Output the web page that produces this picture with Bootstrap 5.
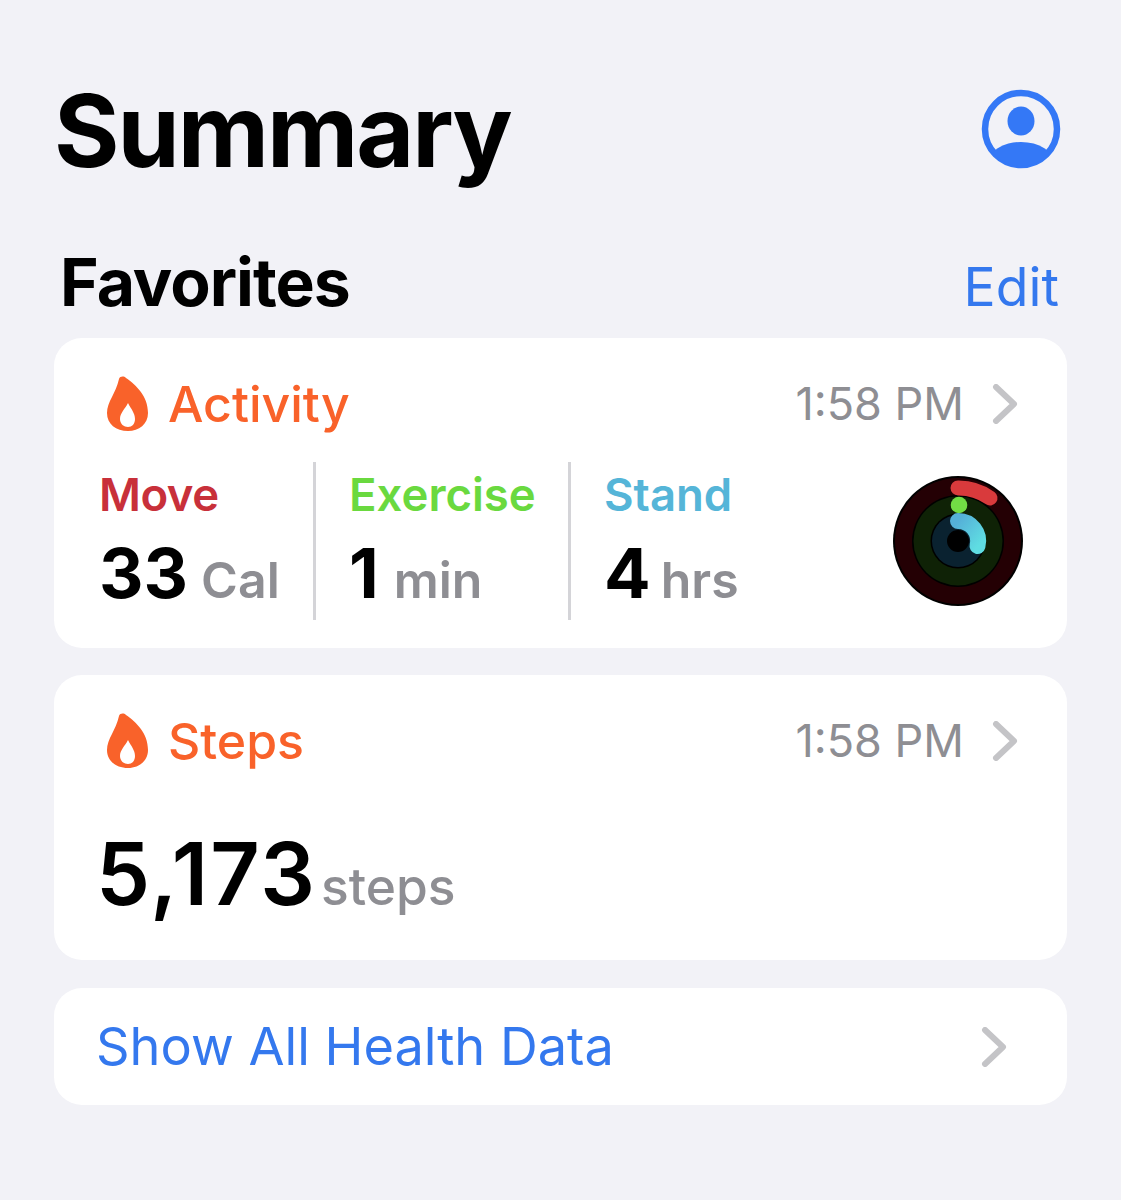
<!DOCTYPE html>
<html lang="en">
<head>
<meta charset="UTF-8">
<title>Summary</title>
<link href="https://cdn.jsdelivr.net/npm/bootstrap@5.3.0/dist/css/bootstrap.min.css" rel="stylesheet">
<style>
body { background: #f2f2f7; font-family: Inter, "Liberation Sans", sans-serif; color: #000; }
.screen { width: 1121px; height: 1200px; padding: 76px 54px 0 54px; }
.big-title { font-size: 100px; font-weight: 700; line-height: 110px; letter-spacing: -2px; margin: 0; }
.sec-title { font-size: 66px; font-weight: 700; line-height: 74px; letter-spacing: -1px; margin: 0; padding-left: 6px; }
.edit-link { font-size: 53.5px; color: #3478ee; line-height: 74px; padding-right: 8px; padding-top: 5px; }
.sec-head { margin-top: 59px; margin-bottom: 14px; }
.top-head { height: 110px; }
.avatar { margin-right: 6px; margin-top: -4px; }
.tile { background: #fff; border-radius: 28px; }
.tile-activity { height: 310px; padding: 36px 49px 0 52px; margin-bottom: 27px; }
.tile-steps { height: 285px; padding: 36px 49px 0 52px; margin-bottom: 28px; }
.tile-link { height: 117px; padding: 0 60px 0 42px; }
.tile-name { color: #f9622a; font-size: 50px; font-weight: 500; line-height: 60px; margin-left: 19px; }
.tile-time { color: #8e8e93; font-size: 45px; line-height: 60px; margin-right: 28px; }
.metric { height: 158px; }
.metric-a { width: 217px; border-right: 3px solid #d4d4d8; }
.metric-b { width: 255px; padding-left: 33px; border-right: 3px solid #d4d4d8; }
.metric-c { padding-left: 33px; }
.metric-name { font-size: 45.5px; font-weight: 600; line-height: 66px; letter-spacing: -.5px; }
.metric-val { font-size: 69px; font-weight: 700; line-height: 90px; }
.unit { font-size: 50px; font-weight: 600; color: #8e8e93; margin-left: 13px; }
.unit-wide { margin-left: 15px; }
.unit-tight { margin-left: 10px; }
.c-move { color: #c8303a; }
.c-ex { color: #6ad93f; letter-spacing: 0; }
.c-stand { color: #55b5d8; letter-spacing: 0; }
.steps-val { font-size: 86px; font-weight: 600; line-height: 100px; margin-top: 53px; margin-left: -10px; letter-spacing: 2px; }
.steps-unit { font-size: 51.5px; font-weight: 500; color: #8e8e93; margin-left: 4px; letter-spacing: 0; }
.link-text { font-size: 52.3px; color: #3478ee; }
.metric-row { margin-top: 28px; margin-left: -7px; }
.ring-icon { margin-top: 14px; margin-right: -5px; }
</style>
</head>
<body>
<div class="screen">
  <div class="d-flex justify-content-between align-items-center top-head">
    <h1 class="big-title">Summary</h1>
    <svg class="avatar" width="80" height="80" viewBox="0 0 80 80"><defs><clipPath id="av"><circle cx="40" cy="40" r="37"/></clipPath></defs><circle cx="40" cy="40" r="36" fill="none" stroke="#3478f6" stroke-width="6.5"/><ellipse cx="40" cy="32" rx="13.5" ry="14.5" fill="#3478f6"/><ellipse cx="40" cy="74" rx="33" ry="21" fill="#3478f6" clip-path="url(#av)"/></svg>
  </div>
  <div class="d-flex justify-content-between sec-head">
    <h2 class="sec-title">Favorites</h2>
    <div class="edit-link">Edit</div>
  </div>
  <div class="tile tile-activity">
    <div class="d-flex align-items-center">
      <svg width="43" height="56" viewBox="0 0 43 56"><path d="M13 3C14 0 18 0 20 2C30 9 42 20 42 37C42 48 33 55 22 55C10 55 1 48 1 37C1 26 10 17 13 3Z" fill="#f9622a"/><path d="M22 27C25 33 29 37 29 43C29 48 26 51 22 51C18 51 14 48 14 43C14 37 19 33 22 27Z" fill="#fff"/></svg>
      <span class="tile-name">Activity</span>
      <span class="tile-time ms-auto">1:58 PM</span>
      <svg width="26" height="40" viewBox="0 0 26 40"><path d="M4 3L22 20L4 37" fill="none" stroke="#c4c4c7" stroke-width="6" stroke-linecap="round" stroke-linejoin="round"/></svg>
    </div>
    <div class="d-flex metric-row">
      <div class="metric metric-a"><div class="metric-name c-move">Move</div><div class="metric-val">33<span class="unit">Cal</span></div></div>
      <div class="metric metric-b"><div class="metric-name c-ex">Exercise</div><div class="metric-val">1<span class="unit unit-wide">min</span></div></div>
      <div class="metric metric-c"><div class="metric-name c-stand">Stand</div><div class="metric-val">4<span class="unit unit-tight">hrs</span></div></div>
      <svg class="ms-auto ring-icon" width="130" height="130" viewBox="0 0 130 130">
        <defs><linearGradient id="bl" x1="0" y1="0" x2="1" y2="1"><stop offset="0" stop-color="#55b0d8"/><stop offset="1" stop-color="#5fdde2"/></linearGradient></defs>
        <circle cx="65" cy="65" r="65" fill="#000"/>
        <circle cx="65" cy="65" r="63" fill="#240004"/>
        <circle cx="65" cy="65" r="46" fill="#000"/>
        <circle cx="65" cy="65" r="44.5" fill="#0f2206"/>
        <circle cx="65" cy="65" r="27.5" fill="#000"/>
        <circle cx="65" cy="65" r="26" fill="#0a2230"/>
        <circle cx="65" cy="65" r="11" fill="#000"/>
        <path d="M65 12A54 54 0 0 1 97 22" fill="none" stroke="#d93a3c" stroke-width="15" stroke-linecap="round"/>
        <circle cx="66" cy="29" r="8.3" fill="#72dc45"/>
        <path d="M65 45A20 20 0 0 1 84.5 70" fill="none" stroke="url(#bl)" stroke-width="16" stroke-linecap="round"/>
      </svg>
    </div>
  </div>
  <div class="tile tile-steps">
    <div class="d-flex align-items-center">
      <svg width="43" height="56" viewBox="0 0 43 56"><path d="M13 3C14 0 18 0 20 2C30 9 42 20 42 37C42 48 33 55 22 55C10 55 1 48 1 37C1 26 10 17 13 3Z" fill="#f9622a"/><path d="M22 27C25 33 29 37 29 43C29 48 26 51 22 51C18 51 14 48 14 43C14 37 19 33 22 27Z" fill="#fff"/></svg>
      <span class="tile-name">Steps</span>
      <span class="tile-time ms-auto">1:58 PM</span>
      <svg width="26" height="40" viewBox="0 0 26 40"><path d="M4 3L22 20L4 37" fill="none" stroke="#c4c4c7" stroke-width="6" stroke-linecap="round" stroke-linejoin="round"/></svg>
    </div>
    <div class="steps-val">5,173<span class="steps-unit">steps</span></div>
  </div>
  <div class="tile tile-link d-flex align-items-center justify-content-between">
    <span class="link-text">Show All Health Data</span>
    <svg width="26" height="40" viewBox="0 0 26 40"><path d="M4 3L22 20L4 37" fill="none" stroke="#c4c4c7" stroke-width="6" stroke-linecap="round" stroke-linejoin="round"/></svg>
  </div>
</div>
<script src="https://cdn.jsdelivr.net/npm/bootstrap@5.3.0/dist/js/bootstrap.bundle.min.js"></script>
</body>
</html>
